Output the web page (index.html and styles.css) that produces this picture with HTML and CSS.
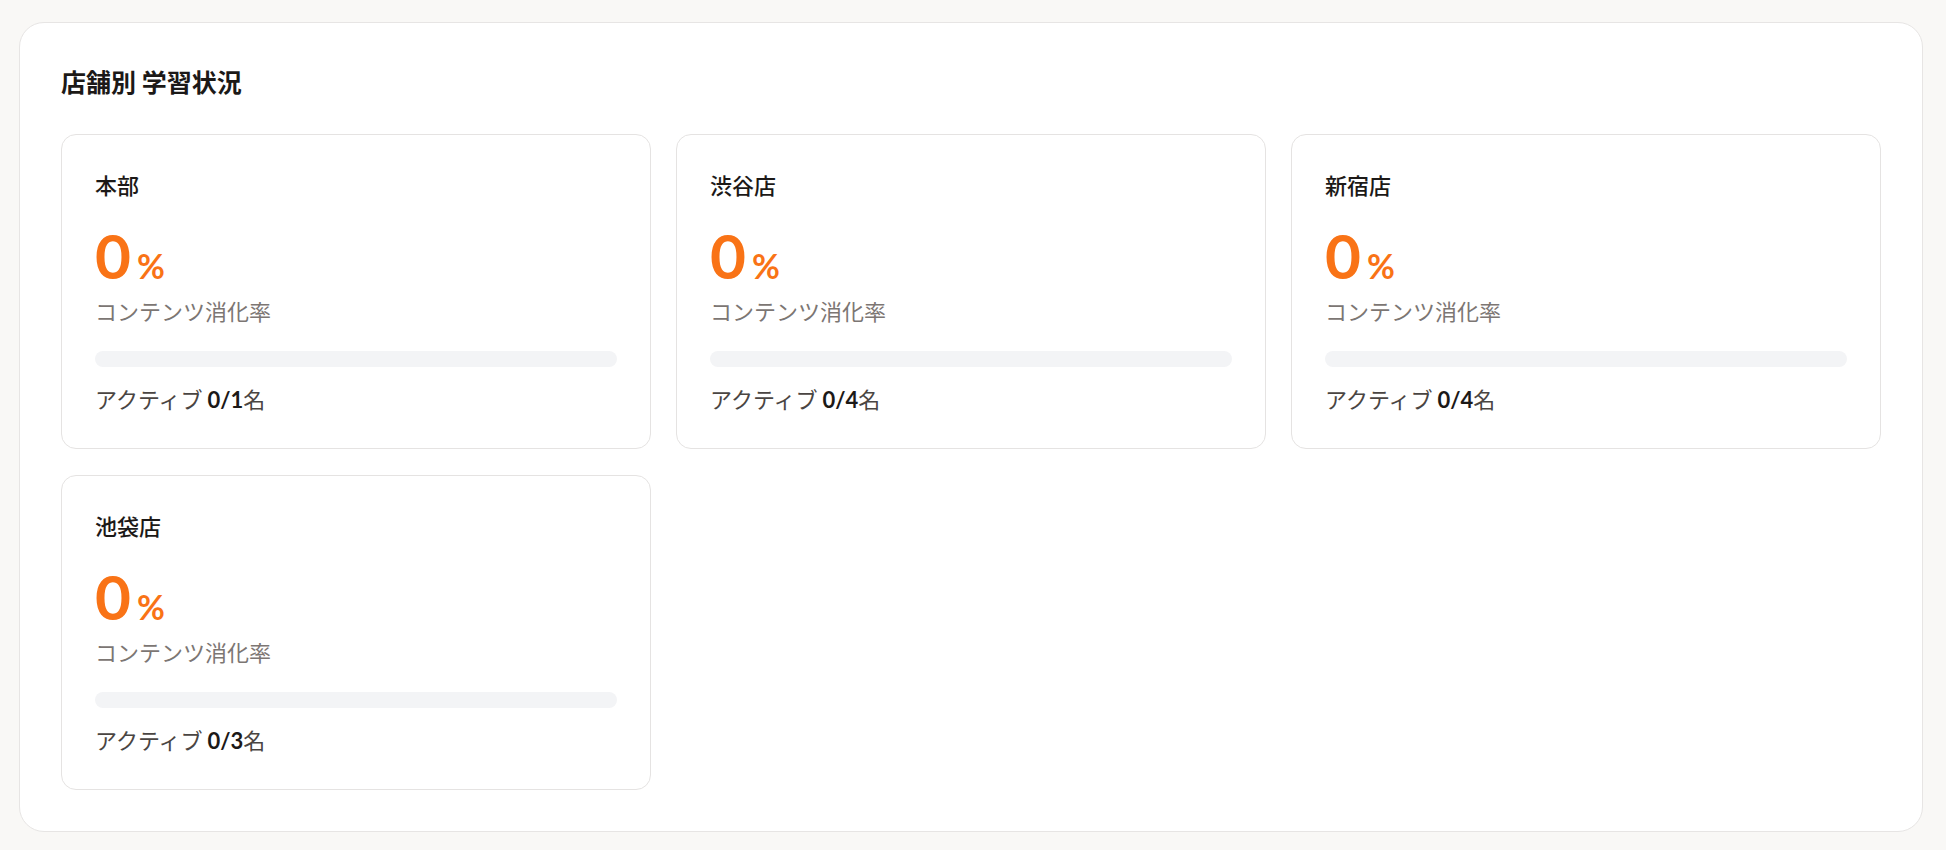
FILE: index.html
```html
<!DOCTYPE html>
<html lang="ja">
<head>
    <meta charset="UTF-8">
    <meta name="viewport" content="width=device-width, initial-scale=1.0">
    <title>店舗別 学習状況</title>
    <link rel="stylesheet" href="styles.css">
</head>
<body>

<div class="page">
    <section class="panel">
        <h2 class="panel-title">店舗別 学習状況</h2>
        <div class="store-grid">
            <div class="store-card">
                <h3 class="store-name">本部</h3>
                <div class="rate"><span class="rate-num">0</span><span class="rate-unit">%</span></div>
                <p class="rate-label">コンテンツ消化率</p>
                <div class="bar"><div class="bar-fill" style="width: 0%"></div></div>
                <p class="active">アクティブ <b>0/1</b>名</p>
            </div>
            <div class="store-card">
                <h3 class="store-name">渋谷店</h3>
                <div class="rate"><span class="rate-num">0</span><span class="rate-unit">%</span></div>
                <p class="rate-label">コンテンツ消化率</p>
                <div class="bar"><div class="bar-fill" style="width: 0%"></div></div>
                <p class="active">アクティブ <b>0/4</b>名</p>
            </div>
            <div class="store-card">
                <h3 class="store-name">新宿店</h3>
                <div class="rate"><span class="rate-num">0</span><span class="rate-unit">%</span></div>
                <p class="rate-label">コンテンツ消化率</p>
                <div class="bar"><div class="bar-fill" style="width: 0%"></div></div>
                <p class="active">アクティブ <b>0/4</b>名</p>
            </div>
            <div class="store-card">
                <h3 class="store-name">池袋店</h3>
                <div class="rate"><span class="rate-num">0</span><span class="rate-unit">%</span></div>
                <p class="rate-label">コンテンツ消化率</p>
                <div class="bar"><div class="bar-fill" style="width: 0%"></div></div>
                <p class="active">アクティブ <b>0/3</b>名</p>
            </div>
        </div>
    </section>
</div>

</body>
</html>
```

FILE: styles.css
```css
body {
    margin: 0;
    font-family: "Noto Sans CJK JP", "Noto Sans", sans-serif;
    background-color: #f9f8f6;
    color: #1c1917;
}
.page {
    padding: 22px 23px 19px 19px;
}
.panel {
    background: white;
    border: 1px solid #e7e5e4;
    border-radius: 25px;
    padding: 41px;
}
.panel-title {
    margin: 0 0 35px;
    font-size: 25px;
    line-height: 35px;
    font-weight: bold;
}
.store-grid {
    display: grid;
    grid-template-columns: repeat(3, 1fr);
    gap: 26px 25px;
}
.store-card {
    border: 1px solid #e5e3e2;
    border-radius: 15px;
    padding: 33px;
}
.store-name {
    margin: 0;
    font-size: 22px;
    line-height: 33px;
    font-weight: 500;
}
.rate {
    margin-top: 24px;
    height: 60px;
    color: #f97316;
    line-height: 60px;
    font-family: Lato, "Noto Sans CJK JP", sans-serif;
}
.rate-num {
    font-size: 62px;
    font-weight: bold;
}
.rate-unit {
    margin-left: 6px;
    font-size: 34px;
    font-weight: bold;
}
.rate-label {
    margin: 9px 0 0;
    font-size: 22px;
    line-height: 33px;
    color: #7c7673;
}
.bar {
    margin-top: 24px;
    height: 16px;
    border-radius: 8px;
    background-color: #f3f4f6;
    overflow: hidden;
}
.bar-fill {
    height: 100%;
    background-color: #f97316;
}
.active {
    margin: 15px 0 0;
    font-size: 22px;
    line-height: 33px;
    color: #4a4542;
}
.active b {
    font-family: Lato, "Noto Sans CJK JP", sans-serif;
    line-height: 1;
    color: #1c1917;
    font-weight: bold;
}
```
